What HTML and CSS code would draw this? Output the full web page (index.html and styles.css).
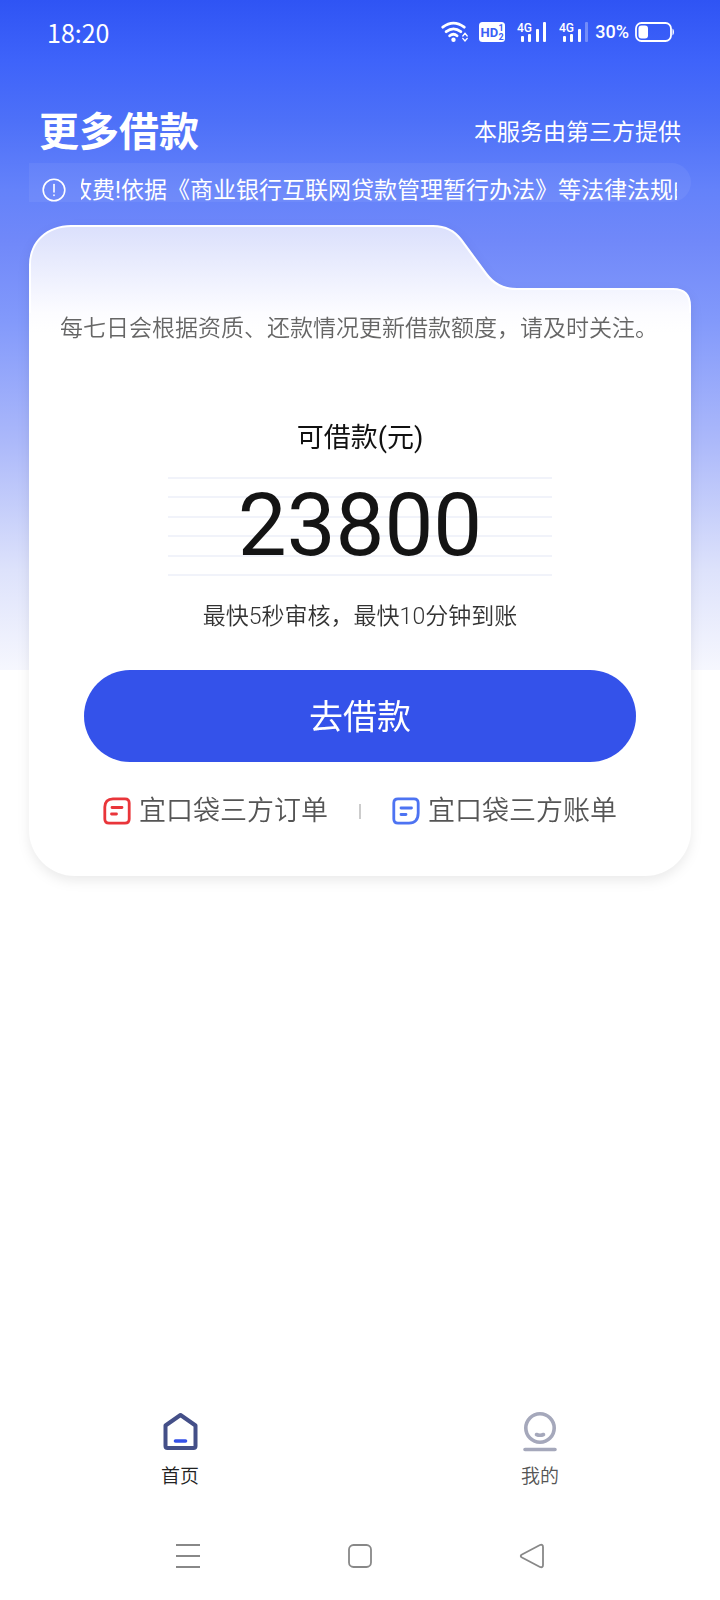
FILE: index.html
```html
<!DOCTYPE html>
<html lang="zh-CN">
<head>
<meta charset="utf-8">
<meta name="viewport" content="width=device-width, initial-scale=1">
<title>更多借款</title>
<link rel="stylesheet" href="styles.css">
</head>
<body>
<div class="page">
  <div class="status">
    <time class="clock">18:20</time>
    <div class="indicators">
      <svg width="28" height="22" viewBox="0 0 28 22" fill="none" stroke="#fff" stroke-width="2.8" stroke-linecap="round">
        <path d="M1.800 6.200Q12.500-2 23.200 6.200M5.200 10.700Q12.500 5 19.800 10.700M8.700 14.800Q12.500 11.600 16 14.800"/>
        <circle cx="12.500" cy="18.800" r="2.200" fill="#fff" stroke="none"/>
        <path d="M21.800 15l2.200-2.600 2.200 2.600M21.800 17.400l2.200 2.600 2.200-2.600" stroke-width="1.400"/>
      </svg>
      <svg class="hd" width="26" height="20" viewBox="0 0 26 20">
        <rect width="26" height="20" rx="3.500" fill="#fff"/>
        <text x="1.500" y="15" class="hd-main">HD</text>
        <text x="19.500" y="9" class="hd-sub">1</text>
        <text x="19.500" y="17.500" class="hd-sub">2</text>
      </svg>
      <svg class="signal" width="30" height="22" viewBox="0 0 30 22" fill="#fff">
        <text x="0" y="11" class="net">4G</text>
        <rect x="4" y="15" width="3" height="6" rx="1"/><rect x="11" y="13" width="3" height="8" rx="1"/><rect x="19" y="8" width="3" height="13" rx="1"/><rect x="26" y="1" width="3" height="20" rx="1"/>
      </svg>
      <svg class="signal" width="30" height="22" viewBox="0 0 30 22" fill="#fff">
        <text x="0" y="11" class="net">4G</text>
        <rect x="4" y="15" width="3" height="6" rx="1"/><rect x="11" y="13" width="3" height="8" rx="1"/><rect x="19" y="8" width="3" height="13" rx="1"/><rect x="26" y="1" width="3" height="20" rx="1" opacity=".3"/>
      </svg>
      <span class="charge">30%</span>
      <svg width="40" height="20" viewBox="0 0 40 20">
        <rect x="1" y="1" width="35" height="18" rx="5.500" fill="none" stroke="#fff" stroke-width="1.800"/>
        <rect x="3.500" y="3.500" width="9.500" height="13" rx="3" fill="#fff"/>
        <path d="M37.500 6.500q1.500.5 1.500 3.500t-1.500 3.500z" fill="#fff"/>
      </svg>
    </div>
  </div>

  <header class="head">
    <h1 class="title">更多借款</h1>
    <span class="provider">本服务由第三方提供</span>
  </header>

  <main class="main">
    <div class="notice">
      <svg class="notice-icon" width="24" height="24" viewBox="0 0 24 24" fill="none" stroke="#fff" stroke-width="1.600" stroke-linecap="round">
        <circle cx="12" cy="12" r="10.800"/><path d="M12 6.500v7.500"/><path d="M12 17v.5"/>
      </svg>
      <div class="ticker"><span class="ticker-text">收费!依据《商业银行互联网贷款管理暂行办法》等法律法规的</span></div>
    </div>

    <section class="card">
      <svg class="card-top" viewBox="0 0 662 88" preserveAspectRatio="none">
        <defs>
          <linearGradient id="tab" x1="0" y1="0" x2="0" y2="1">
            <stop offset="0" stop-color="#dbe0fc"/><stop offset="1" stop-color="#fcfcff"/>
          </linearGradient>
        </defs>
        <path d="M0 88V40C0 16 18 0 42 0H404C417 0 426 5 433 14L458 48C465 57 474 63 488 63H644Q662 63 662 81V88Z" fill="#fff"/>
        <path d="M2 88V40C2 17 19 2 42 2H404C416 2 425 7 431 15L456 49C463 59 473 65 488 65H644Q660 65 660 81V88Z" fill="url(#tab)"/>
      </svg>
      <div class="card-body">
        <p class="desc">每七日会根据资质、还款情况更新借款额度，请及时关注。</p>
        <h2 class="label">可借款(元)</h2>
        <div class="amount">23800</div>
        <p class="speed">最快5秒审核，最快10分钟到账</p>
        <button class="borrow" type="button">去借款</button>
        <nav class="links">
          <a class="link" href="#orders">
            <svg width="28" height="28" viewBox="0 0 28 28" fill="none" stroke="#e9353a" stroke-width="2.800" stroke-linecap="round" stroke-linejoin="round">
              <path d="M10 1.800H22Q26.200 1.800 26.200 6V22Q26.200 26.200 22 26.200H6Q1.800 26.200 1.800 22V10Q2 2 10 1.800Z"/><path d="M9 10.500h10M8.500 17h5"/>
            </svg>
            <span>宜口袋三方订单</span>
          </a>
          <span class="divider"></span>
          <a class="link" href="#bills">
            <svg width="28" height="28" viewBox="0 0 28 28" fill="none" stroke="#4d73f2" stroke-width="2.800" stroke-linecap="round" stroke-linejoin="round">
              <path d="M6 1.800H22Q26.200 1.800 26.200 6V16Q26 26 17 26.200H6Q1.800 26.200 1.800 22V6Q1.800 1.800 6 1.800Z"/><path d="M9 11h10.500M9 17.500h5"/>
            </svg>
            <span>宜口袋三方账单</span>
          </a>
        </nav>
      </div>
    </section>
  </main>

  <nav class="tabs">
    <a class="tab tab-active" href="#home">
      <svg width="40" height="40" viewBox="0 0 40 40" fill="none" stroke="#444f88" stroke-width="4" stroke-linecap="round" stroke-linejoin="round">
        <path d="M20.500 3L35.500 13.500V34Q35.500 36 33.500 36H7.500Q5.500 36 5.500 34V13.500Z"/><path d="M15.500 29h10" stroke="#3450e8" stroke-width="3.600"/>
      </svg>
      <span>首页</span>
    </a>
    <a class="tab" href="#mine">
      <svg width="40" height="40" viewBox="0 0 40 40" fill="none" stroke="#a5a8bb" stroke-width="3.600" stroke-linecap="round">
        <circle cx="20" cy="16" r="14.200"/><path d="M16.500 22.500q3.500 1.600 7 0M5 37.500h30"/>
      </svg>
      <span>我的</span>
    </a>
  </nav>

  <div class="system">
    <button class="key" type="button" aria-label="菜单">
      <svg width="26" height="26" viewBox="0 0 26 26" stroke="#888" stroke-width="2"><path d="M1 2h24M1 13h24M1 24h24"/></svg>
    </button>
    <button class="key" type="button" aria-label="主屏幕">
      <svg width="26" height="26" viewBox="0 0 26 26" fill="none" stroke="#888" stroke-width="1.800"><rect x="2" y="2" width="22" height="22" rx="4.500"/></svg>
    </button>
    <button class="key" type="button" aria-label="返回">
      <svg width="26" height="26" viewBox="0 0 26 26" fill="none" stroke="#888" stroke-width="1.800" stroke-linejoin="round"><path d="M2.500 11.700L21 2Q24 1 24 4V22Q24 25 21 24L2.500 14.300Q1 13 2.500 11.700Z"/></svg>
    </button>
  </div>
</div>
</body>
</html>
```
FILE: styles.css
```css
* { box-sizing: border-box; }

body {
  margin: 0;
  background: #fff;
  font-family: Roboto, "Noto Sans CJK SC", sans-serif;
  font-weight: 350;
  color: #333;
}

h1, h2, p { margin: 0; }
a { color: inherit; text-decoration: none; }
svg { display: block; flex: none; }

.page {
  display: flex;
  flex-direction: column;
  min-height: 100vh;
  background: linear-gradient(#2f54f4 0, #3e63fa 60px, #4d70f8 120px, #6482fa 190px, #7088f9 240px, #8299fb 320px, #abb8fa 440px, #dde2fb 570px, #f6f7fe 670px) no-repeat;
  background-size: 100% 670px;
}

.status {
  display: flex;
  align-items: center;
  justify-content: space-between;
  height: 64px;
  padding: 0 45px 0 47px;
  color: #fff;
}
.clock { font: 400 25px/32px "Noto Sans CJK SC", sans-serif; }
.indicators { display: flex; align-items: center; }
.hd { margin-left: 10px; }
.signal { margin-left: 12px; }
.charge { margin: 0 6px 0 6px; font: 500 18px/24px Roboto, sans-serif; }
.hd-main { font: 700 13px Roboto, sans-serif; fill: #3b60f6; }
.hd-sub { font: 700 9px Roboto, sans-serif; fill: #3b60f6; }
.net { font: 500 12px Roboto, sans-serif; }

.head {
  display: flex;
  align-items: center;
  justify-content: space-between;
  padding: 41px 39px 2px 39px;
  color: #fff;
}
.title { font-size: 40px; line-height: 56px; font-weight: 700; }
.provider { font-size: 23px; line-height: 32px; font-weight: 400; }

.main { flex: 1; padding: 0 29px; }

.notice {
  display: flex;
  align-items: center;
  gap: 15px;
  height: 39px;
  padding: 14px 14px 0 13px;
  border-radius: 0 24px 24px 0;
  background: rgba(255, 255, 255, .06);
  color: #fff;
}
.ticker { flex: 1; min-width: 0; overflow: hidden; }
.ticker-text {
  display: block;
  margin-left: -12px;
  padding-top: 2px;
  font-size: 23px;
  line-height: 32px;
  font-weight: 400;
  white-space: nowrap;
}

.card {
  margin-top: 23px;
  border-radius: 46px 18px 46px 46px;
  filter: drop-shadow(0 5px 6px rgba(0, 0, 0, .08));
}
.card-top { width: 100%; height: 88px; }
.card-body {
  display: flex;
  flex-direction: column;
  align-items: center;
  padding: 0 55px 45px;
  border-radius: 0 0 46px 46px;
  background: linear-gradient(#fcfcff, #fff 20px);
}
.desc {
  align-self: flex-start;
  margin: 0 -24px;
  padding-top: 2px;
  font-size: 23px;
  line-height: 28px;
  color: #666;
}
.label { margin-top: 75px; font-size: 27px; line-height: 40px; font-weight: 400; color: #111; }
.amount {
  width: 384px;
  max-width: 100%;
  height: 99px;
  margin-top: 19px;
  border-bottom: 2px solid #f1f3fa;
  background: repeating-linear-gradient(#f1f3fa 0 2px, transparent 2px 20%);
  font: 400 87px/96px Roboto, sans-serif;
  text-align: center;
  color: #141414;
}
.speed { margin-top: 25px; font-size: 23px; line-height: 32px; }
.borrow {
  align-self: stretch;
  height: 92px;
  margin-top: 37px;
  padding: 0 0 4px;
  border: 0;
  border-radius: 46px;
  background: #3452ea;
  font: inherit;
  font-size: 34px;
  font-weight: 400;
  color: #fff;
}
.links {
  display: flex;
  align-items: center;
  justify-content: center;
  gap: 31px;
  margin-top: 29px;
  font-size: 27px;
  line-height: 40px;
  white-space: nowrap;
  color: #555;
}
.link { display: flex; align-items: center; gap: 8px; }
.divider { width: 2px; height: 15px; background: #ccc; }

.tabs { display: flex; padding-bottom: 23px; font-size: 19px; line-height: 28px; }
.tab { flex: 1; display: flex; flex-direction: column; align-items: center; gap: 11px; color: #555; }
.tab-active { color: #222; }

.system { display: flex; justify-content: space-between; padding: 29px 175px 31px; }
.key { display: flex; padding: 0; border: 0; background: none; }
```
